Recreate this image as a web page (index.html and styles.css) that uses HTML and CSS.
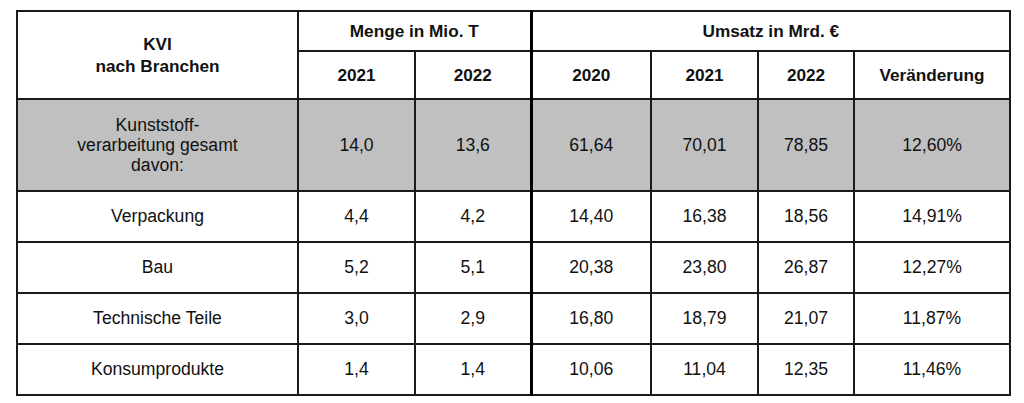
FILE: index.html
```html
<!DOCTYPE html>
<html lang="de">
<head>
<meta charset="utf-8">
<link rel="stylesheet" href="styles.css">
</head>
<body>
<div class="wrap">
<table class="kvi">
  <colgroup>
    <col class="c1"><col class="c2"><col class="c3"><col class="c4"><col class="c5"><col class="c6"><col class="c7">
  </colgroup>
  <thead>
    <tr class="h1">
      <th rowspan="2" class="branch">KVI<br>nach Branchen</th>
      <th colspan="2">Menge in Mio. T</th>
      <th colspan="4" class="thick">Umsatz in Mrd. €</th>
    </tr>
    <tr class="h2">
      <th>2021</th><th>2022</th>
      <th class="thick">2020</th><th>2021</th><th>2022</th><th>Veränderung</th>
    </tr>
  </thead>
  <tbody>
    <tr class="total">
      <td class="lbl">Kunststoff-<br>verarbeitung gesamt<br>davon:</td>
      <td>14,0</td><td>13,6</td>
      <td class="thick">61,64</td><td>70,01</td><td>78,85</td><td>12,60%</td>
    </tr>
    <tr>
      <td>Verpackung</td><td>4,4</td><td>4,2</td>
      <td class="thick">14,40</td><td>16,38</td><td>18,56</td><td>14,91%</td>
    </tr>
    <tr>
      <td>Bau</td><td>5,2</td><td>5,1</td>
      <td class="thick">20,38</td><td>23,80</td><td>26,87</td><td>12,27%</td>
    </tr>
    <tr>
      <td>Technische Teile</td><td>3,0</td><td>2,9</td>
      <td class="thick">16,80</td><td>18,79</td><td>21,07</td><td>11,87%</td>
    </tr>
    <tr>
      <td>Konsumprodukte</td><td>1,4</td><td>1,4</td>
      <td class="thick">10,06</td><td>11,04</td><td>12,35</td><td>11,46%</td>
    </tr>
  </tbody>
</table>
</div>
</body>
</html>
```
FILE: styles.css
```css
html, body {
  margin: 0;
  padding: 0;
  background: #ffffff;
}
.wrap {
  padding: 10px 0 0 16px;
}
.kvi {
  border-collapse: collapse;
  table-layout: fixed;
  width: 993px;
  font-family: "Liberation Sans", Arial, sans-serif;
  font-size: 17.6px;
  color: #111;
  border: 2px solid #3a3a3a;
}
.c1 { width: 281px; }
.c2 { width: 117px; }
.c3 { width: 116px; }
.c4 { width: 120px; }
.c5 { width: 107px; }
.c6 { width: 96px; }
.c7 { width: 156px; }
.kvi th, .kvi td {
  border: 2px solid #1a1a1a;
  text-align: center;
  vertical-align: middle;
  padding: 0;
}
.kvi th {
  font-weight: bold;
  font-size: 17.2px;
}
.kvi .thick {
  border-left: 3px solid #000;
}
.h1 th { height: 38px; }
.h2 th { height: 46px; }
.branch { line-height: 22px; }
.total td {
  background: #c0c0c0;
  height: 90px;
}
.total .lbl { line-height: 20px; }
.kvi tbody tr td { height: 49px; }
.kvi tbody tr.total td { height: 90px; }
```
